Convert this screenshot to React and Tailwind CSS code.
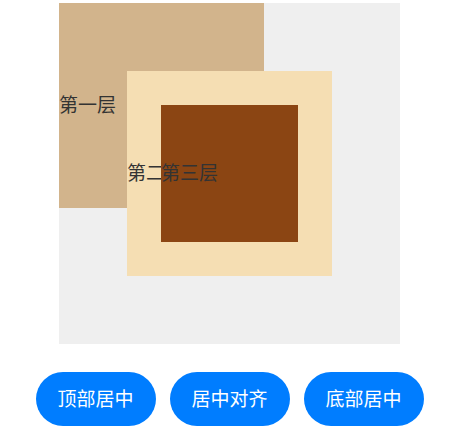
export default function App() {
  const font = { fontFamily: '"Noto Sans CJK SC", "Noto Sans", sans-serif' }

  return (
    <div className="w-[452px] h-[439px] bg-white pl-[7px] pt-[3px] flex flex-col items-center" style={font}>
      {/* stack container */}
      <div className="relative w-[341px] h-[341px] bg-[#efefef]">
        <div className="absolute left-0 top-0 w-[205px] h-[205px] bg-[#d2b48c] flex items-center pb-[4px]">
          <span className="text-[19px] leading-none text-[#333]">第一层</span>
        </div>
        <div className="absolute left-[68px] top-[68px] w-[205px] h-[205px] bg-[#f5deb3] flex items-center pb-[4px]">
          <span className="text-[19px] leading-none text-[#333]">第二层</span>
        </div>
        <div className="absolute left-[102px] top-[102px] w-[137px] h-[137px] bg-[#8b4513] flex items-center pb-[4px]">
          <span className="text-[19px] leading-none text-[#333]">第三层</span>
        </div>
      </div>

      <div className="mt-[28px] flex gap-[14px]">
        {['顶部居中', '居中对齐', '底部居中'].map((label) => (
          <button
            key={label}
            className="w-[120px] h-[54px] rounded-full bg-[#007dff] text-white text-[19px] leading-none flex items-center justify-center pb-[4px]"
          >
            {label}
          </button>
        ))}
      </div>
    </div>
  )
}
